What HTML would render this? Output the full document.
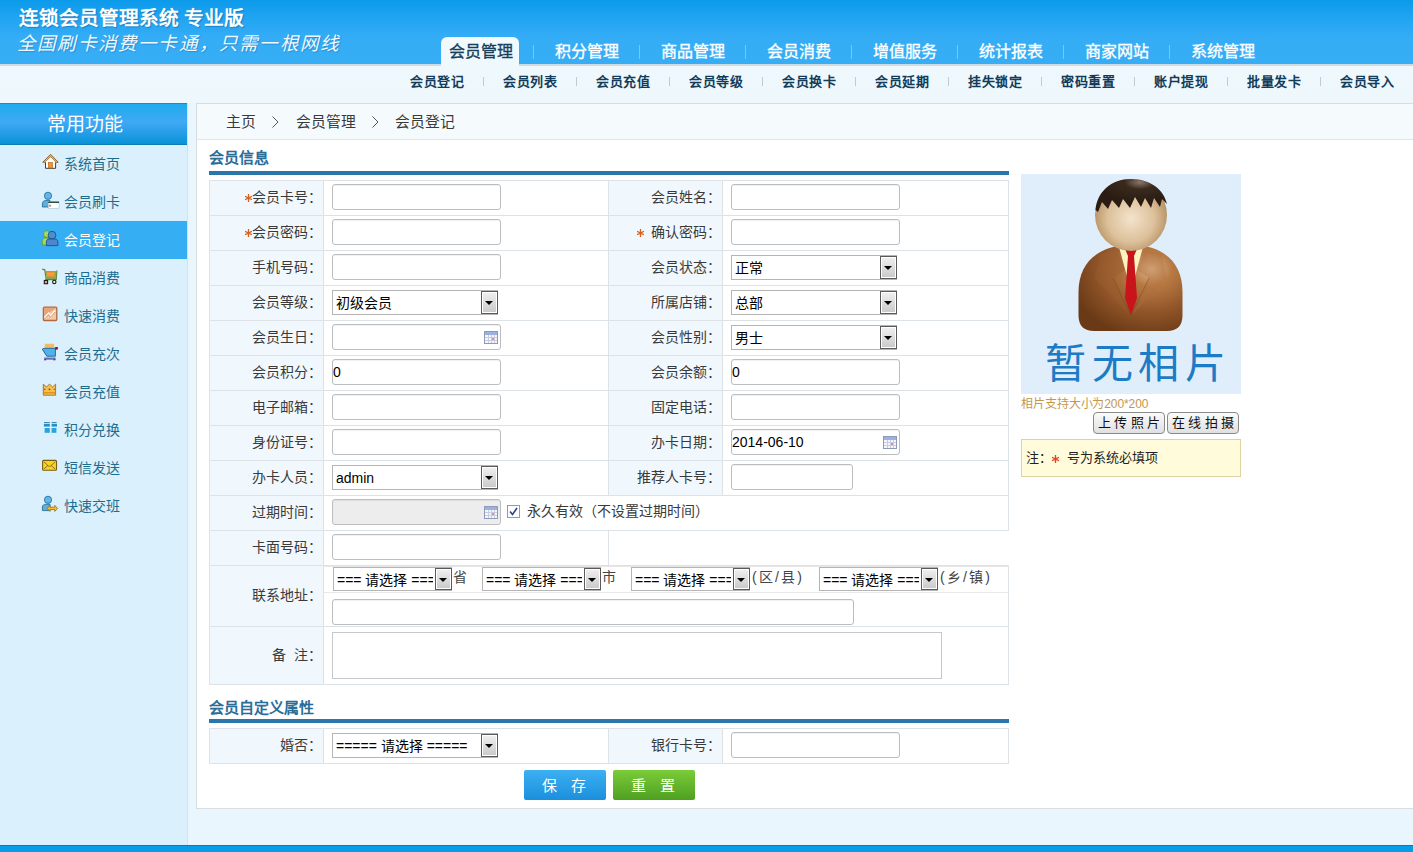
<!DOCTYPE html><html lang="zh-CN"><head><meta charset="utf-8"><style>
*{margin:0;padding:0;box-sizing:border-box}
html,body{width:1413px;height:852px;overflow:hidden}
body{position:relative;background:#eaf6fd;font-family:"Liberation Sans",sans-serif;color:#333}
.abs{position:absolute}
.t{position:absolute;white-space:nowrap;line-height:1}
#hdr{left:0;top:0;width:1413px;height:64px;background:linear-gradient(#0b9aea,#22a5f2 30%,#35adf6 60%,#36adf5)}
#hline{left:0;top:64px;width:1413px;height:2px;background:#cfdbe3}
#sub{left:0;top:66px;width:1413px;height:37px;background:linear-gradient(#eef8fd,#eef7fc)}
.tab{color:#fff;font-size:16px;-webkit-text-stroke:0.35px currentColor}
.sep{position:absolute;width:1px;background:#7ec6f0}
.subi{font-size:13px;letter-spacing:0.6px;font-weight:bold;color:#123c5a}
.ssep{position:absolute;width:1px;height:9px;background:#bfccd4}
#side{left:0;top:103px;width:187px;height:742px;background:#daf0fd}
#sideb{left:187px;top:103px;width:1px;height:742px;background:#cfe3ef}
#sidehd{left:0;top:103px;width:187px;height:42px;border-top:1px solid #1a8cc2;border-bottom:1px solid #0c7cb4;background:linear-gradient(#1eabee,#40a9f5 45%,#2a9fea 68%,#0893d6)}
.si{font-size:14px;color:#1e6d8e}
#act{left:0;top:221px;width:187px;height:38px;background:#35aef4}
#box{left:196px;top:103px;width:1217px;height:706px;background:#fff;border:1px solid #d8dde0;border-right:none}
#crumb{left:197px;top:104px;width:1216px;height:36px;background:#f5fafd;border-bottom:1px solid #dfe4e7}
.cr{font-size:14.8px;font-weight:350;color:#3a3a3a}
.h2{font-size:15px;font-weight:bold;color:#2a6e98}
.bar{position:absolute;height:4px;background:#2b77ab}
.lab{font-size:14px;color:#3a3a3a;text-align:right}
.star{color:#e0561b}
.inp{position:absolute;height:26px;border:1px solid #bdbdbd;border-radius:3px;background:#fff;box-shadow:inset 0 1px 1px rgba(0,0,0,.06)}
.sel{position:absolute;height:25px;border:1px solid #b5b5b5;background:#fff;font-size:13.5px;color:#000}
.arr{position:absolute;right:0;top:0;width:17px;height:23px;border:1px solid #555;background:linear-gradient(#fff,#fff) ;}

.arrb{position:absolute;border:1px solid #5a5a5a;box-shadow:inset 0 0 0 1px #fff;background:linear-gradient(#f0f0f0,#c9c9c9)}
.arrb:after{content:"";position:absolute;left:3px;top:9px;border-left:4px solid transparent;border-right:4px solid transparent;border-top:4.5px solid #000}
.btn{color:#fff;font-size:15px;text-align:center;line-height:30px;border-radius:2px}

.pbtn{border:1px solid #8a8a8a;border-radius:4px;background:linear-gradient(#fbfbfb,#e0e0e0);font-size:13px;color:#111;text-align:center;line-height:20px}
#foot{left:0;top:845px;width:1413px;height:7px;background:#069ce8;border-top:1px solid #0a78b8}
</style></head><body>
<div id="hdr" class="abs"></div><div id="hline" class="abs"></div><div id="sub" class="abs"></div>
<div class="t" style="left:19px;top:8.5px;font-size:19.7px;font-weight:bold;color:#fff;text-shadow:1px 1px 1px rgba(0,50,110,.35)">连锁会员管理系统 专业版</div>
<div class="t" style="left:17px;top:34.5px;font-size:18.5px;letter-spacing:1.2px;color:rgba(255,255,255,.95);font-style:italic;text-shadow:1px 1px 1px rgba(0,60,120,.25)">全国刷卡消费一卡通，只需一根网线</div>
<div class="abs" style="left:441px;top:37px;width:78px;height:29px;background:linear-gradient(#f4fafe,#eef8fd);border-radius:6px 6px 0 0"></div>
<div class="t tab" style="left:449px;top:44px;color:#173f5b">会员管理</div>
<div class="t tab" style="left:555px;top:44px;color:#fff">积分管理</div>
<div class="sep" style="left:533px;top:45px;height:14px"></div>
<div class="t tab" style="left:661px;top:44px;color:#fff">商品管理</div>
<div class="sep" style="left:639px;top:45px;height:14px"></div>
<div class="t tab" style="left:767px;top:44px;color:#fff">会员消费</div>
<div class="sep" style="left:745px;top:45px;height:14px"></div>
<div class="t tab" style="left:873px;top:44px;color:#fff">增值服务</div>
<div class="sep" style="left:851px;top:45px;height:14px"></div>
<div class="t tab" style="left:979px;top:44px;color:#fff">统计报表</div>
<div class="sep" style="left:957px;top:45px;height:14px"></div>
<div class="t tab" style="left:1085px;top:44px;color:#fff">商家网站</div>
<div class="sep" style="left:1063px;top:45px;height:14px"></div>
<div class="t tab" style="left:1191px;top:44px;color:#fff">系统管理</div>
<div class="sep" style="left:1169px;top:45px;height:14px"></div>
<div class="t subi" style="left:410px;top:75px">会员登记</div>
<div class="t subi" style="left:503px;top:75px">会员列表</div>
<div class="ssep" style="left:483px;top:77px"></div>
<div class="t subi" style="left:596px;top:75px">会员充值</div>
<div class="ssep" style="left:576px;top:77px"></div>
<div class="t subi" style="left:689px;top:75px">会员等级</div>
<div class="ssep" style="left:669px;top:77px"></div>
<div class="t subi" style="left:782px;top:75px">会员换卡</div>
<div class="ssep" style="left:762px;top:77px"></div>
<div class="t subi" style="left:875px;top:75px">会员延期</div>
<div class="ssep" style="left:855px;top:77px"></div>
<div class="t subi" style="left:968px;top:75px">挂失锁定</div>
<div class="ssep" style="left:948px;top:77px"></div>
<div class="t subi" style="left:1061px;top:75px">密码重置</div>
<div class="ssep" style="left:1041px;top:77px"></div>
<div class="t subi" style="left:1154px;top:75px">账户提现</div>
<div class="ssep" style="left:1134px;top:77px"></div>
<div class="t subi" style="left:1247px;top:75px">批量发卡</div>
<div class="ssep" style="left:1227px;top:77px"></div>
<div class="t subi" style="left:1340px;top:75px">会员导入</div>
<div class="ssep" style="left:1320px;top:77px"></div>
<div id="side" class="abs"></div><div id="sideb" class="abs"></div><div id="sidehd" class="abs"></div>
<div class="t" style="left:46.5px;top:114.5px;font-size:19px;color:#fff">常用功能</div>
<div id="act" class="abs"></div>
<div class="t si" style="left:64px;top:157px;color:#1e6d8e">系统首页</div>
<div class="t si" style="left:64px;top:195px;color:#1e6d8e">会员刷卡</div>
<div class="t si" style="left:64px;top:233px;color:#fff">会员登记</div>
<div class="t si" style="left:64px;top:271px;color:#1e6d8e">商品消费</div>
<div class="t si" style="left:64px;top:309px;color:#1e6d8e">快速消费</div>
<div class="t si" style="left:64px;top:347px;color:#1e6d8e">会员充次</div>
<div class="t si" style="left:64px;top:385px;color:#1e6d8e">会员充值</div>
<div class="t si" style="left:64px;top:423px;color:#1e6d8e">积分兑换</div>
<div class="t si" style="left:64px;top:461px;color:#1e6d8e">短信发送</div>
<div class="t si" style="left:64px;top:499px;color:#1e6d8e">快速交班</div>
<svg class="abs" style="left:40px;top:150px" width="22" height="22" viewBox="0 0 22 22"><path d="M10.6 4.3 L2.8 12.2 L4.6 12.6 L10.6 6.9 L16.6 12.6 L18.2 12.2 Z" fill="#f7b24a" stroke="#7a4a1a" stroke-width="0.8" stroke-linejoin="round"/>
 <path d="M5.5 12 L10.6 7.3 L15.6 12 L15.6 18.3 L5.5 18.3 Z" fill="#fff"/>
 <path d="M5.5 12.4 V18.3 H15.6 V12.4" fill="none" stroke="#3d3d3d" stroke-width="1"/>
 <rect x="8.3" y="12.4" width="4.3" height="5.6" fill="#e79b2e" stroke="#b8621a" stroke-width="0.6"/></svg>
<svg class="abs" style="left:40px;top:189px" width="22" height="22" viewBox="0 0 22 22"><circle cx="8" cy="6.8" r="3.6" fill="#5cb8ee" stroke="#2f6f96" stroke-width="0.9"/>
 <path d="M2.4 18 V14.5 C2.4 12.5 4 11.6 5.5 11.4 L10 11.4 L10 18 Z" fill="#5aaee0" stroke="#2f6f96" stroke-width="0.9"/>
 <rect x="8.2" y="12.8" width="10.8" height="6.4" fill="#fff" stroke="#9fb5b5" stroke-width="0.5"/>
 <rect x="8.2" y="12.6" width="10.8" height="1.3" fill="#173f3a"/>
 <rect x="9" y="15.8" width="2.1" height="1.8" fill="#c98a80"/></svg>
<svg class="abs" style="left:40px;top:227px" width="22" height="22" viewBox="0 0 22 22"><circle cx="6.8" cy="7" r="3.3" fill="#a8d86a" stroke="#5d9a2a" stroke-width="0.8"/>
 <path d="M2.3 18 V13.5 C2.3 12 3.5 11 5 11 L8 11 L8 18 Z" fill="#a3d867" stroke="#5d9a2a" stroke-width="0.8"/>
 <circle cx="12" cy="8.2" r="3.9" fill="#4a90d0" stroke="#1f4f88" stroke-width="0.9"/>
 <path d="M6.4 18.6 V14.5 C6.4 12.8 7.8 12 9.5 12 L14.5 12 C16.3 12 17.8 12.8 17.8 14.5 V18.6 Z" fill="#4d86cc" stroke="#1f4f88" stroke-width="0.9"/></svg>
<svg class="abs" style="left:40px;top:265px" width="22" height="22" viewBox="0 0 22 22"><path d="M2.2 4.2 L4.8 4.8 L6.2 14 L16.2 14 L16.8 5.5" fill="none" stroke="#5b8f3a" stroke-width="1.3"/>
 <path d="M5.6 6 L16.6 6 L15.8 13.6 L6.4 13.6 Z" fill="#79b24a"/>
 <rect x="6.6" y="6.6" width="8" height="5.2" fill="#f08c2c"/>
 <path d="M6.6 8.4 H14.6 M6.6 10.2 H14.6" stroke="#f6c070" stroke-width="0.6"/>
 <rect x="5.2" y="14" width="11.4" height="1.2" fill="#4e8a2f"/>
 <rect x="4.3" y="15.5" width="3.3" height="3.2" fill="#caa" stroke="#2a1a14" stroke-width="1.1"/>
 <circle cx="14.3" cy="17" r="1.7" fill="#eed" stroke="#1f1a10" stroke-width="1.1"/></svg>
<svg class="abs" style="left:40px;top:303px" width="22" height="22" viewBox="0 0 22 22"><rect x="3.4" y="4.2" width="13.4" height="13.3" rx="1" fill="#f3c9a6" stroke="#b0683e" stroke-width="1.3"/>
 <path d="M4.2 5 H16 L4.2 13 Z" fill="#e59b6e" opacity="0.8"/>
 <path d="M4.6 14.8 L8.6 10.2 L10.6 13.2 L15 7.6" fill="none" stroke="#fff" stroke-width="1.4"/>
 <path d="M5 15.6 L8.6 11.4 L10.4 14.3 L15.2 9" fill="none" stroke="#c98a70" stroke-width="0.8"/></svg>
<svg class="abs" style="left:40px;top:341px" width="22" height="22" viewBox="0 0 22 22"><rect x="5" y="3" width="9" height="3.8" fill="#f4b760" stroke="#e9c38c" stroke-width="0.6"/>
 <path d="M2.3 8.2 L3.9 7.3 L15.4 7.3 L15.4 15.2 L6.8 15.2 Z" fill="#4fb2ea" stroke="#1e5e8a" stroke-width="0.9" stroke-linejoin="round"/>
 <rect x="15.2" y="6" width="2.6" height="2.6" fill="#8a1020"/>
 <path d="M4.2 17.6 H15.6" stroke="#6a6ac0" stroke-width="2.2"/>
 <path d="M4.2 18.8 h2 M13.4 18.8 h2" stroke="#2a2a60" stroke-width="1"/></svg>
<svg class="abs" style="left:40px;top:379px" width="22" height="22" viewBox="0 0 22 22"><path d="M3.3 5.2 L6.5 8 L9.5 5 L12.6 8 L15.6 5.2 L15.6 16.2 L3.3 16.2 Z" fill="#f6c04a" stroke="#a0702a" stroke-width="0.9" stroke-linejoin="round"/>
 <rect x="3.8" y="13.2" width="11.3" height="1.2" fill="#d48a20"/>
 <circle cx="9.5" cy="10.3" r="0.9" fill="#b03010"/><circle cx="4.8" cy="10.3" r="0.7" fill="#b03010"/><circle cx="14.3" cy="10.3" r="0.7" fill="#d04020"/></svg>
<svg class="abs" style="left:40px;top:417px" width="22" height="22" viewBox="0 0 22 22"><rect x="4" y="5.2" width="5.8" height="0.8" fill="#2a6f9a"/><rect x="11.6" y="5.2" width="5" height="0.8" fill="#2a6f9a"/>
 <rect x="3.9" y="6.8" width="5.9" height="2.8" fill="#1e92cc"/><rect x="11.6" y="6.8" width="5.4" height="2.8" fill="#1e92cc"/>
 <rect x="4.6" y="11" width="5.2" height="4.8" fill="#2aa2dc"/><rect x="11.6" y="11" width="4.8" height="4.8" fill="#2aa2dc"/></svg>
<svg class="abs" style="left:40px;top:455px" width="22" height="22" viewBox="0 0 22 22"><rect x="2.6" y="5.4" width="13.9" height="9.9" rx="1" fill="#f7d324" stroke="#7a5e10" stroke-width="1.1"/>
 <path d="M3.8 6.8 L8.6 11.2 H10.4 L15.2 6.8 M3.8 14 L8 10.4 M15.2 14 L11 10.4" fill="none" stroke="#7a5e10" stroke-width="0.8"/></svg>
<svg class="abs" style="left:40px;top:493px" width="22" height="22" viewBox="0 0 22 22"><circle cx="8" cy="6.8" r="3.6" fill="#5cb8ee" stroke="#2f6f96" stroke-width="0.9"/>
 <path d="M2.4 17.6 V14 C2.4 12.2 4 11.3 5.5 11.3 L10 11.3 L10 17.6 Z" fill="#5aaee0" stroke="#2f6f96" stroke-width="0.9"/>
 <path d="M7.2 15.4 L10 12.4 L10 14.2 L14.8 14.2 L14.8 12.4 L17.6 15.4 L14.8 18.4 L14.8 16.6 L10 16.6 L10 18.4 Z" fill="#f5c02a" stroke="#9a6a10" stroke-width="0.8" stroke-linejoin="round"/></svg>
<div id="box" class="abs"></div><div id="crumb" class="abs"></div>
<div class="t cr" style="left:226px;top:115px">主页</div>
<div class="t cr" style="left:296px;top:115px">会员管理</div>
<div class="t cr" style="left:395px;top:115px">会员登记</div>
<svg class="abs" style="left:272px;top:116px" width="7" height="12" viewBox="0 0 7 12"><path d="M0.5 0.5L6 6L0.5 11.5" fill="none" stroke="#555" stroke-width="1"/></svg>
<svg class="abs" style="left:372px;top:116px" width="7" height="12" viewBox="0 0 7 12"><path d="M0.5 0.5L6 6L0.5 11.5" fill="none" stroke="#555" stroke-width="1"/></svg>
<div class="abs" style="left:210px;top:181px;width:113px;height:34px;background:#f1f8fd"></div>
<div class="abs" style="left:210px;top:216px;width:113px;height:34px;background:#f1f8fd"></div>
<div class="abs" style="left:210px;top:251px;width:113px;height:34px;background:#f1f8fd"></div>
<div class="abs" style="left:210px;top:286px;width:113px;height:34px;background:#f1f8fd"></div>
<div class="abs" style="left:210px;top:321px;width:113px;height:34px;background:#f1f8fd"></div>
<div class="abs" style="left:210px;top:356px;width:113px;height:34px;background:#f1f8fd"></div>
<div class="abs" style="left:210px;top:391px;width:113px;height:34px;background:#f1f8fd"></div>
<div class="abs" style="left:210px;top:426px;width:113px;height:34px;background:#f1f8fd"></div>
<div class="abs" style="left:210px;top:461px;width:113px;height:34px;background:#f1f8fd"></div>
<div class="abs" style="left:210px;top:496px;width:113px;height:34px;background:#f1f8fd"></div>
<div class="abs" style="left:210px;top:531px;width:113px;height:34px;background:#f1f8fd"></div>
<div class="abs" style="left:210px;top:566px;width:113px;height:60px;background:#f1f8fd"></div>
<div class="abs" style="left:210px;top:627px;width:113px;height:57px;background:#f1f8fd"></div>
<div class="abs" style="left:609px;top:181px;width:113px;height:34px;background:#f1f8fd"></div>
<div class="abs" style="left:609px;top:216px;width:113px;height:34px;background:#f1f8fd"></div>
<div class="abs" style="left:609px;top:251px;width:113px;height:34px;background:#f1f8fd"></div>
<div class="abs" style="left:609px;top:286px;width:113px;height:34px;background:#f1f8fd"></div>
<div class="abs" style="left:609px;top:321px;width:113px;height:34px;background:#f1f8fd"></div>
<div class="abs" style="left:609px;top:356px;width:113px;height:34px;background:#f1f8fd"></div>
<div class="abs" style="left:609px;top:391px;width:113px;height:34px;background:#f1f8fd"></div>
<div class="abs" style="left:609px;top:426px;width:113px;height:34px;background:#f1f8fd"></div>
<div class="abs" style="left:609px;top:461px;width:113px;height:34px;background:#f1f8fd"></div>
<div class="abs" style="left:209px;top:180px;width:800px;height:1px;background:#dde2e6"></div>
<div class="abs" style="left:209px;top:215px;width:800px;height:1px;background:#dde2e6"></div>
<div class="abs" style="left:209px;top:250px;width:800px;height:1px;background:#dde2e6"></div>
<div class="abs" style="left:209px;top:285px;width:800px;height:1px;background:#dde2e6"></div>
<div class="abs" style="left:209px;top:320px;width:800px;height:1px;background:#dde2e6"></div>
<div class="abs" style="left:209px;top:355px;width:800px;height:1px;background:#dde2e6"></div>
<div class="abs" style="left:209px;top:390px;width:800px;height:1px;background:#dde2e6"></div>
<div class="abs" style="left:209px;top:425px;width:800px;height:1px;background:#dde2e6"></div>
<div class="abs" style="left:209px;top:460px;width:800px;height:1px;background:#dde2e6"></div>
<div class="abs" style="left:209px;top:495px;width:800px;height:1px;background:#dde2e6"></div>
<div class="abs" style="left:209px;top:530px;width:800px;height:1px;background:#dde2e6"></div>
<div class="abs" style="left:209px;top:565px;width:800px;height:1px;background:#dde2e6"></div>
<div class="abs" style="left:209px;top:626px;width:800px;height:1px;background:#dde2e6"></div>
<div class="abs" style="left:209px;top:684px;width:800px;height:1px;background:#dde2e6"></div>
<div class="abs" style="left:209px;top:180px;width:1px;height:505px;background:#dde2e6"></div>
<div class="abs" style="left:323px;top:180px;width:1px;height:505px;background:#dde2e6"></div>
<div class="abs" style="left:608px;top:180px;width:1px;height:316px;background:#dde2e6"></div>
<div class="abs" style="left:722px;top:180px;width:1px;height:316px;background:#dde2e6"></div>
<div class="abs" style="left:608px;top:530px;width:1px;height:36px;background:#dde2e6"></div>
<div class="abs" style="left:1008px;top:180px;width:1px;height:351px;background:#dde2e6"></div>
<div class="abs" style="left:1008px;top:565px;width:1px;height:120px;background:#dde2e6"></div>
<div class="t lab" style="right:1091px;top:190px"><svg width="7" height="8" viewBox="0 0 7 8" style="display:inline-block;vertical-align:top;margin-top:4px;margin-right:0px"><path d="M3.5 0V8M0 2.3L7 5.7M0 5.7L7 2.3" stroke="#d9601c" stroke-width="1.3"/></svg>会员卡号：</div>
<div class="t lab" style="right:1091px;top:225px"><svg width="7" height="8" viewBox="0 0 7 8" style="display:inline-block;vertical-align:top;margin-top:4px;margin-right:0px"><path d="M3.5 0V8M0 2.3L7 5.7M0 5.7L7 2.3" stroke="#d9601c" stroke-width="1.3"/></svg>会员密码：</div>
<div class="t lab" style="right:1091px;top:260px">手机号码：</div>
<div class="t lab" style="right:1091px;top:295px">会员等级：</div>
<div class="t lab" style="right:1091px;top:330px">会员生日：</div>
<div class="t lab" style="right:1091px;top:365px">会员积分：</div>
<div class="t lab" style="right:1091px;top:400px">电子邮箱：</div>
<div class="t lab" style="right:1091px;top:435px">身份证号：</div>
<div class="t lab" style="right:1091px;top:470px">办卡人员：</div>
<div class="t lab" style="right:1091px;top:505px">过期时间：</div>
<div class="t lab" style="right:1091px;top:540px">卡面号码：</div>
<div class="t lab" style="right:692px;top:190px">会员姓名：</div>
<div class="t lab" style="right:692px;top:225px"><svg width="7" height="8" viewBox="0 0 7 8" style="display:inline-block;vertical-align:top;margin-top:4px;margin-right:7px"><path d="M3.5 0V8M0 2.3L7 5.7M0 5.7L7 2.3" stroke="#d9601c" stroke-width="1.3"/></svg>确认密码：</div>
<div class="t lab" style="right:692px;top:260px">会员状态：</div>
<div class="t lab" style="right:692px;top:295px">所属店铺：</div>
<div class="t lab" style="right:692px;top:330px">会员性别：</div>
<div class="t lab" style="right:692px;top:365px">会员余额：</div>
<div class="t lab" style="right:692px;top:400px">固定电话：</div>
<div class="t lab" style="right:692px;top:435px">办卡日期：</div>
<div class="t lab" style="right:692px;top:470px">推荐人卡号：</div>
<div class="t lab" style="right:1091px;top:588px">联系地址：</div>
<div class="t lab" style="right:1091px;top:648px">备&nbsp;&nbsp;注：</div>
<div class="inp" style="left:332px;top:184px;width:169px;height:26px;background:#fff"></div>
<div class="inp" style="left:332px;top:219px;width:169px;height:26px;background:#fff"></div>
<div class="inp" style="left:332px;top:254px;width:169px;height:26px;background:#fff"></div>
<div class="sel" style="left:332px;top:290px;width:166px;height:25px"><span class="t" style="left:3px;top:5px;font-size:14px;width:143px;overflow:hidden">初级会员</span><div class="arrb" style="left:148px;top:0px;width:17px;height:23px"></div></div>
<div class="inp" style="left:332px;top:324px;width:169px;height:26px;background:#fff"><svg class="abs" style="left:151px;top:6px" width="14" height="13" viewBox="0 0 14 13"><rect x="0.5" y="0.5" width="13" height="12" fill="#f4f6fb" stroke="#8d9ab8"/><rect x="1" y="1" width="12" height="3" fill="#9db1e0"/><path d="M1 6.5H13M1 9.5H13M4.5 4V12M7.5 4V12M10.5 4V12" stroke="#c4cde3" stroke-width="1"/><rect x="8" y="7" width="2" height="2" fill="#e28c8c"/></svg></div>
<div class="inp" style="left:332px;top:359px;width:169px;height:26px;background:#fff"><span class="t" style="left:0px;top:5px;font-size:14px;color:#000">0</span></div>
<div class="inp" style="left:332px;top:394px;width:169px;height:26px;background:#fff"></div>
<div class="inp" style="left:332px;top:429px;width:169px;height:26px;background:#fff"></div>
<div class="sel" style="left:332px;top:465px;width:166px;height:25px"><span class="t" style="left:3px;top:5px;font-size:14px;width:143px;overflow:hidden">admin</span><div class="arrb" style="left:148px;top:0px;width:17px;height:23px"></div></div>
<div class="inp" style="left:332px;top:499px;width:169px;height:26px;background:#ededed"><svg class="abs" style="left:151px;top:6px" width="14" height="13" viewBox="0 0 14 13"><rect x="0.5" y="0.5" width="13" height="12" fill="#f4f6fb" stroke="#8d9ab8"/><rect x="1" y="1" width="12" height="3" fill="#9db1e0"/><path d="M1 6.5H13M1 9.5H13M4.5 4V12M7.5 4V12M10.5 4V12" stroke="#c4cde3" stroke-width="1"/><rect x="8" y="7" width="2" height="2" fill="#e28c8c"/></svg></div>
<div class="inp" style="left:332px;top:534px;width:169px;height:26px;background:#fff"></div>
<div class="inp" style="left:731px;top:184px;width:169px;height:26px;background:#fff"></div>
<div class="inp" style="left:731px;top:219px;width:169px;height:26px;background:#fff"></div>
<div class="sel" style="left:731px;top:255px;width:166px;height:25px"><span class="t" style="left:3px;top:5px;font-size:14px;width:143px;overflow:hidden">正常</span><div class="arrb" style="left:148px;top:0px;width:17px;height:23px"></div></div>
<div class="sel" style="left:731px;top:290px;width:166px;height:25px"><span class="t" style="left:3px;top:5px;font-size:14px;width:143px;overflow:hidden">总部</span><div class="arrb" style="left:148px;top:0px;width:17px;height:23px"></div></div>
<div class="sel" style="left:731px;top:325px;width:166px;height:25px"><span class="t" style="left:3px;top:5px;font-size:14px;width:143px;overflow:hidden">男士</span><div class="arrb" style="left:148px;top:0px;width:17px;height:23px"></div></div>
<div class="inp" style="left:731px;top:359px;width:169px;height:26px;background:#fff"><span class="t" style="left:0px;top:5px;font-size:14px;color:#000">0</span></div>
<div class="inp" style="left:731px;top:394px;width:169px;height:26px;background:#fff"></div>
<div class="inp" style="left:731px;top:429px;width:169px;height:26px;background:#fff"><span class="t" style="left:0px;top:5px;font-size:14px;color:#000">2014-06-10</span><svg class="abs" style="left:151px;top:6px" width="14" height="13" viewBox="0 0 14 13"><rect x="0.5" y="0.5" width="13" height="12" fill="#f4f6fb" stroke="#8d9ab8"/><rect x="1" y="1" width="12" height="3" fill="#9db1e0"/><path d="M1 6.5H13M1 9.5H13M4.5 4V12M7.5 4V12M10.5 4V12" stroke="#c4cde3" stroke-width="1"/><rect x="8" y="7" width="2" height="2" fill="#e28c8c"/></svg></div>
<div class="inp" style="left:731px;top:464px;width:122px;height:26px;background:#fff"></div>
<svg class="abs" style="left:507px;top:505px" width="13" height="13" viewBox="0 0 13 13"><rect x="0.5" y="0.5" width="12" height="12" fill="#fff" stroke="#8f9cb0"/><path d="M3 6.5L5.5 9.5L10 3" fill="none" stroke="#2b3f8f" stroke-width="1.6"/></svg>
<div class="t lab" style="left:527px;top:504px">永久有效（不设置过期时间）</div>
<div class="abs" style="left:323px;top:566px;width:686px;height:1px;background:#e6e6e6"></div>
<div class="abs" style="left:323px;top:592px;width:686px;height:1px;background:#e8e8e8"></div>
<div class="sel" style="left:333px;top:567px;width:119px;height:24px"><span class="t" style="left:3px;top:5px;font-size:14px;width:96px;overflow:hidden">=== 请选择 ===</span><div class="arrb" style="left:101px;top:0px;width:17px;height:22px"></div></div>
<div class="t lab" style="left:453px;top:570px;letter-spacing:0px;color:#444">省</div>
<div class="sel" style="left:482px;top:567px;width:119px;height:24px"><span class="t" style="left:3px;top:5px;font-size:14px;width:96px;overflow:hidden">=== 请选择 ===</span><div class="arrb" style="left:101px;top:0px;width:17px;height:22px"></div></div>
<div class="t lab" style="left:602px;top:570px;letter-spacing:0px;color:#444">市</div>
<div class="sel" style="left:631px;top:567px;width:119px;height:24px"><span class="t" style="left:3px;top:5px;font-size:14px;width:96px;overflow:hidden">=== 请选择 ===</span><div class="arrb" style="left:101px;top:0px;width:17px;height:22px"></div></div>
<div class="t lab" style="left:752px;top:570px;letter-spacing:2.2px;color:#444">(区/县)</div>
<div class="sel" style="left:819px;top:567px;width:119px;height:24px"><span class="t" style="left:3px;top:5px;font-size:14px;width:96px;overflow:hidden">=== 请选择 ===</span><div class="arrb" style="left:101px;top:0px;width:17px;height:22px"></div></div>
<div class="t lab" style="left:940px;top:570px;letter-spacing:2.2px;color:#444">(乡/镇)</div>
<div class="inp" style="left:332px;top:599px;width:522px;height:26px;background:#fff"></div>
<div class="abs" style="left:332px;top:632px;width:610px;height:47px;border:1px solid #c8c8c8;background:#fff"></div>
<div class="t h2" style="left:209px;top:150px">会员信息</div>
<div class="bar" style="left:209px;top:171px;width:800px"></div>
<div class="t h2" style="left:209px;top:700px">会员自定义属性</div>
<div class="bar" style="left:209px;top:719px;width:800px"></div>
<div class="abs" style="left:210px;top:729px;width:113px;height:34px;background:#f1f8fd"></div>
<div class="abs" style="left:609px;top:729px;width:113px;height:34px;background:#f1f8fd"></div>
<div class="abs" style="left:209px;top:728px;width:800px;height:1px;background:#dde2e6"></div>
<div class="abs" style="left:209px;top:763px;width:800px;height:1px;background:#dde2e6"></div>
<div class="abs" style="left:209px;top:728px;width:1px;height:36px;background:#dde2e6"></div>
<div class="abs" style="left:323px;top:728px;width:1px;height:36px;background:#dde2e6"></div>
<div class="abs" style="left:608px;top:728px;width:1px;height:36px;background:#dde2e6"></div>
<div class="abs" style="left:722px;top:728px;width:1px;height:36px;background:#dde2e6"></div>
<div class="abs" style="left:1008px;top:728px;width:1px;height:36px;background:#dde2e6"></div>
<div class="t lab" style="right:1091px;top:738px">婚否：</div>
<div class="t lab" style="right:692px;top:738px">银行卡号：</div>
<div class="sel" style="left:332px;top:733px;width:166px;height:25px"><span class="t" style="left:3px;top:5px;font-size:14px;width:143px;overflow:hidden">===== 请选择 =====</span><div class="arrb" style="left:148px;top:0px;width:17px;height:23px"></div></div>
<div class="inp" style="left:731px;top:732px;width:169px;height:26px;background:#fff"></div>
<div class="abs btn" style="left:524px;top:770px;width:82px;height:30px;background:linear-gradient(#3cb0f2,#1b8fdc)"><span class="t" style="left:17.5px;top:7.5px">保</span><span class="t" style="left:46.5px;top:7.5px">存</span></div>
<div class="abs btn" style="left:613px;top:770px;width:82px;height:30px;background:linear-gradient(#7acc38,#4f9f22)"><span class="t" style="left:17.5px;top:7.5px">重</span><span class="t" style="left:46.5px;top:7.5px">置</span></div>
<div class="abs" style="left:1021px;top:174px;width:220px;height:220px;background:#dfeefa"></div>
<svg class="abs" style="left:1021px;top:174px" width="220" height="220" viewBox="0 0 220 220">
<defs>
<radialGradient id="gHead" cx="0.5" cy="0.55" r="0.55"><stop offset="0" stop-color="#f3e3cc"/><stop offset="0.6" stop-color="#dcc09a"/><stop offset="1" stop-color="#b08a5c"/></radialGradient>
<radialGradient id="gHair" cx="0.62" cy="0.1" r="0.6"><stop offset="0" stop-color="#8a7868"/><stop offset="0.35" stop-color="#3a2a1e"/><stop offset="1" stop-color="#2a1c12"/></radialGradient>
<radialGradient id="gBody" cx="0.7" cy="0.28" r="0.8"><stop offset="0" stop-color="#e0b890"/><stop offset="0.25" stop-color="#b87a44"/><stop offset="0.6" stop-color="#94572a"/><stop offset="1" stop-color="#6a3a16"/></radialGradient>
</defs>
<path d="M57.5 118 C57.5 88 78 71 110 71 C142 71 161.5 88 161.5 118 L161.5 141 C161.5 152 156 157 146 157 L73 157 C63 157 57.5 152 57.5 141 Z" fill="url(#gBody)"/>
<path d="M98 73 L110 117 L122 73 Z" fill="#fbf3c2"/>
<path d="M80 80 L96 76 L104 96 L92 104 L110 142 L74 104 Z" fill="#9a5e2e" opacity="0.45"/>
<path d="M140 80 L124 76 L116 96 L128 104 L110 142 L146 104 Z" fill="#b07040" opacity="0.35"/>
<path d="M104 75 L116 75 L113 82 L116 124 L110 141 L104 124 L107 82 Z" fill="#c8141a"/>
<path d="M92 104 L110 142 L128 104" fill="none" stroke="#7a4a20" stroke-width="0.8" opacity="0.6"/>
<circle cx="110" cy="41" r="36" fill="url(#gHead)"/>
<path d="M74.5 36 C76 18 90 5 110 5 C130 5 143 16 146 30 L141 25 L139 33 L133 24 L130 34 L124 24 L120 33 L114 23 L109 34 L102 25 L98 34 L91 26 L87 35 L81 28 L77 38 Z" fill="url(#gHair)"/>
</svg>
<div class="t" style="left:1045px;top:344px;font-size:41px;font-weight:300;color:#1d7bc6;letter-spacing:5.5px">暂无相片</div>
<div class="t" style="left:1021px;top:398px;font-size:12px;color:#c4974c;letter-spacing:-0.1px">相片支持大小为200*200</div>
<div class="abs pbtn" style="left:1093px;top:412px;width:72px;height:22px">上 传 照 片</div>
<div class="abs pbtn" style="left:1167px;top:412px;width:72px;height:22px">在 线 拍 摄</div>
<div class="abs" style="left:1021px;top:439px;width:220px;height:38px;background:#fffbdb;border:1px solid #dcd3a0"></div>
<div class="t" style="left:1026px;top:451px;font-size:13px;color:#222">注：<svg width="7" height="8" viewBox="0 0 7 8" style="display:inline-block;vertical-align:top;margin-top:4px;margin-right:8px"><path d="M3.5 0V8M0 2.3L7 5.7M0 5.7L7 2.3" stroke="#e0451b" stroke-width="1.3"/></svg>号为系统必填项</div>
<div id="foot" class="abs"></div>
</body></html>
